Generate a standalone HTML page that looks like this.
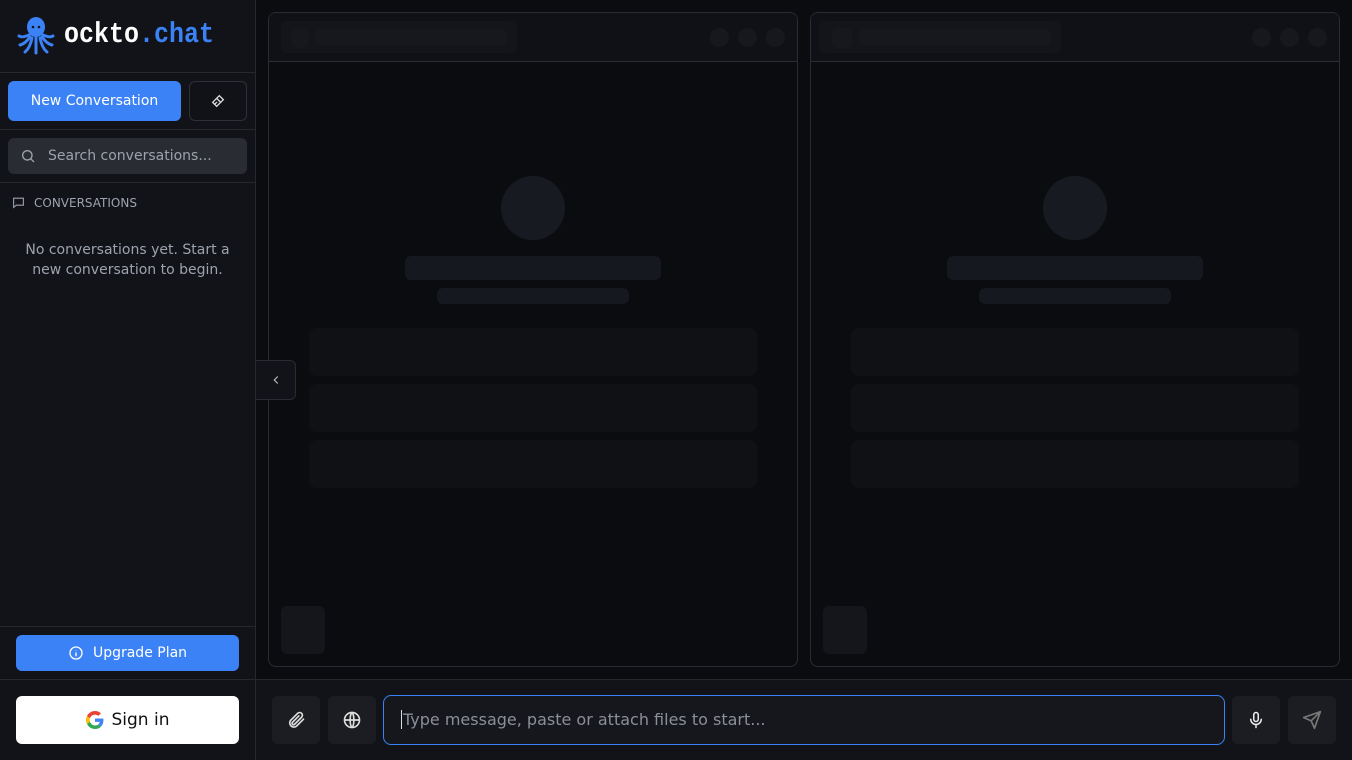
<!DOCTYPE html>
<html><head><meta charset="utf-8"><style>
*{box-sizing:border-box;margin:0;padding:0}
body{width:1352px;height:760px;background:#0b0c10;font-family:"DejaVu Sans","Liberation Sans",sans-serif;color:#e5e7eb;position:relative;overflow:hidden}
.sb{position:absolute;left:0;top:0;width:256px;height:760px;background:#121318;border-right:1px solid #26282e}
.hl{position:absolute;left:0;width:255px;height:1px;background:#26282e}
.btn{position:absolute;border-radius:6px;display:flex;align-items:center;justify-content:center}
.panel{position:absolute;top:12px;width:530px;height:655px;border:1px solid #2a2c33;border-radius:8px;background:#0b0c10;overflow:hidden}
.ph{height:49px;background:#101116;border-bottom:1px solid #2a2c33;position:relative}
.sk{position:absolute;background:#0f1115;border-radius:6px}
.c{position:absolute;border-radius:50%;background:#16181e}
</style></head><body>
<div class="sb">
 <svg style="position:absolute;left:17px;top:16px" width="38" height="40" viewBox="0 0 38 40" fill="#3b82f6">
  <ellipse cx="19" cy="11" rx="9" ry="10"/>
  <g stroke="#3b82f6" stroke-width="3" fill="none" stroke-linecap="round">
   <path d="M12 19 Q5 22 2 20"/><path d="M13 21 Q8 28 3 29"/><path d="M15 22 Q13 32 8 36"/><path d="M19 22 L19 37"/><path d="M23 22 Q25 32 30 36"/><path d="M25 21 Q30 28 35 29"/><path d="M26 19 Q33 22 36 20"/>
  </g>
  <circle cx="16" cy="11" r="1.3" fill="#121318"/><circle cx="22" cy="11" r="1.3" fill="#121318"/>
 </svg>
 <div style="position:absolute;left:64px;top:18px;font-family:'Liberation Mono','DejaVu Sans Mono',monospace;font-weight:bold;font-size:25px;line-height:34px;transform:scaleY(1.15);transform-origin:left center"><span style="color:#fff">ockto</span><span style="color:#3b82f6">.chat</span></div>
 <div class="hl" style="top:72px"></div>
 <div class="btn" style="left:8px;top:81px;width:173px;height:40px;background:#3b82f6;color:#fff;font-size:14px">New Conversation</div>
 <div class="btn" style="left:189px;top:81px;width:58px;height:40px;border:1px solid #2e3037;background:#111217"><svg width="16" height="16" viewBox="0 0 24 24" fill="none" stroke="#ddd" stroke-width="2" stroke-linecap="round"><path d="M14 4l6 6-4 4-6-6z"/><path d="M10 8l-6 6 6 6 6-6"/><path d="M7 17l3-3"/></svg></div>
 <div class="hl" style="top:129px"></div>
 <div class="btn" style="left:8px;top:138px;width:239px;height:36px;background:#2a2c33;justify-content:flex-start;padding-left:12px;color:#9ca3af;font-size:14px"><svg width="16" height="16" viewBox="0 0 24 24" fill="none" stroke="#9ca3af" stroke-width="2"><circle cx="11" cy="11" r="7"/><path d="M16 16l5 5"/></svg><span style="margin-left:12px">Search conversations...</span></div>
 <div class="hl" style="top:182px"></div>
 <svg style="position:absolute;left:12px;top:196px" width="13" height="13" viewBox="0 0 24 24" fill="none" stroke="#9ca3af" stroke-width="2"><path d="M3 4h18v13H8l-5 4z"/></svg>
 <div style="position:absolute;left:34px;top:196px;font-size:12px;color:#9ca3af">CONVERSATIONS</div>
 <div style="position:absolute;left:0;width:255px;top:240px;text-align:center;font-size:14px;line-height:20px;color:#9ca3af">No conversations yet. Start a<br>new conversation to begin.</div>
 <div class="hl" style="top:626px"></div>
 <div class="btn" style="left:16px;top:635px;width:223px;height:36px;background:#3b82f6;color:#fff;font-size:14px"><svg width="16" height="16" viewBox="0 0 24 24" fill="none" stroke="#fff" stroke-width="2"><circle cx="12" cy="12" r="9"/><path d="M12 11v6M12 7.5v.5"/></svg><span style="margin-left:9px">Upgrade Plan</span></div>
 <div class="hl" style="top:679px"></div>
 <div class="btn" style="left:16px;top:696px;width:223px;height:48px;background:#fff;color:#111;font-size:17px"><svg width="18" height="18" viewBox="0 0 48 48"><path fill="#EA4335" d="M24 9.5c3.5 0 6.6 1.2 9.1 3.6l6.8-6.8C35.8 2.4 30.3 0 24 0 14.6 0 6.6 5.4 2.7 13.3l7.9 6.1C12.5 13.6 17.8 9.5 24 9.5z"/><path fill="#4285F4" d="M46.5 24.5c0-1.6-.1-3.1-.4-4.5H24v9h12.7c-.6 2.9-2.2 5.4-4.7 7.1l7.6 5.9c4.4-4.1 6.9-10.1 6.9-17.5z"/><path fill="#FBBC05" d="M10.5 28.6c-.5-1.4-.8-3-.8-4.6s.3-3.2.8-4.6l-7.9-6.1C1 16.5 0 20.1 0 24s1 7.5 2.7 10.7z"/><path fill="#34A853" d="M24 48c6.5 0 11.9-2.1 15.9-5.8l-7.6-5.9c-2.1 1.4-4.9 2.3-8.3 2.3-6.2 0-11.5-4.2-13.4-9.9l-7.9 6.1C6.6 42.6 14.6 48 24 48z"/></svg><span style="margin-left:8px">Sign in</span></div>
</div>

<div class="panel" style="left:268px">
 <div class="ph"><div class="sk" style="left:12px;top:8px;width:236px;height:32px;background:#13151a"></div><div class="c" style="left:21px;top:15px;width:20px;height:20px"></div><div class="sk" style="left:46px;top:16px;width:192px;height:16px;background:#16181e"></div><div class="c" style="left:441px;top:15px;width:19px;height:19px"></div><div class="c" style="left:469px;top:15px;width:19px;height:19px"></div><div class="c" style="left:497px;top:15px;width:19px;height:19px"></div></div>
 <div class="c" style="left:232px;top:163px;width:64px;height:64px;background:#171a21"></div>
 <div class="sk" style="left:136px;top:243px;width:256px;height:24px;background:#15181e"></div>
 <div class="sk" style="left:168px;top:275px;width:192px;height:16px;background:#15181e"></div>
 <div class="sk" style="left:40px;top:315px;width:448px;height:48px;border-radius:8px"></div>
 <div class="sk" style="left:40px;top:371px;width:448px;height:48px;border-radius:8px"></div>
 <div class="sk" style="left:40px;top:427px;width:448px;height:48px;border-radius:8px"></div>
 <div class="sk" style="left:12px;top:593px;width:44px;height:48px;background:#14161b"></div>
</div>
<div class="panel" style="left:810px">
 <div class="ph"><div class="sk" style="left:8px;top:8px;width:242px;height:32px;background:#13151a"></div><div class="sk" style="left:21px;top:15px;width:20px;height:20px;background:#16181e"></div><div class="sk" style="left:48px;top:16px;width:192px;height:16px;background:#16181e"></div><div class="c" style="left:441px;top:15px;width:19px;height:19px"></div><div class="c" style="left:469px;top:15px;width:19px;height:19px"></div><div class="c" style="left:497px;top:15px;width:19px;height:19px"></div></div>
 <div class="c" style="left:232px;top:163px;width:64px;height:64px;background:#171a21"></div>
 <div class="sk" style="left:136px;top:243px;width:256px;height:24px;background:#15181e"></div>
 <div class="sk" style="left:168px;top:275px;width:192px;height:16px;background:#15181e"></div>
 <div class="sk" style="left:40px;top:315px;width:448px;height:48px;border-radius:8px"></div>
 <div class="sk" style="left:40px;top:371px;width:448px;height:48px;border-radius:8px"></div>
 <div class="sk" style="left:40px;top:427px;width:448px;height:48px;border-radius:8px"></div>
 <div class="sk" style="left:12px;top:593px;width:44px;height:48px;background:#14161b"></div>
</div>
<div class="btn" style="left:256px;top:360px;width:40px;height:40px;background:#121318;border:1px solid #2a2c33;border-left:none;border-radius:0 6px 6px 0;z-index:5"><svg width="14" height="14" viewBox="0 0 24 24" fill="none" stroke="#bbb" stroke-width="2"><path d="M15 6l-6 6 6 6"/></svg></div>

<div style="position:absolute;left:256px;top:679px;width:1096px;height:81px;background:#121318;border-top:1px solid #26282e"></div>
<div class="btn" style="left:272px;top:696px;width:48px;height:48px;background:#1c1d23"><svg width="20" height="20" viewBox="0 0 24 24" fill="none" stroke="#ddd" stroke-width="2" stroke-linecap="round"><path d="M21 11l-8.5 8.5a5 5 0 01-7-7L14 4a3.3 3.3 0 014.7 4.7L10.2 17.2a1.7 1.7 0 01-2.4-2.4L15.5 7"/></svg></div>
<div class="btn" style="left:328px;top:696px;width:48px;height:48px;background:#1c1d23"><svg width="20" height="20" viewBox="0 0 24 24" fill="none" stroke="#ddd" stroke-width="2"><circle cx="12" cy="12" r="9"/><path d="M3 12h18M12 3c3 3 3 15 0 18M12 3c-3 3-3 15 0 18"/></svg></div>
<div style="position:absolute;left:383px;top:695px;width:842px;height:50px;border:1px solid #3b82f6;border-radius:8px;background:#16171c;padding-left:17px;line-height:48px;font-size:16px;color:#8b8f98"><span style="border-left:1px solid #ddd;padding-left:1px">Type message, paste or attach files to start...</span></div>
<div class="btn" style="left:1232px;top:696px;width:48px;height:48px;background:#1c1d23"><svg width="18" height="18" viewBox="0 0 24 24" fill="none" stroke="#eee" stroke-width="2" stroke-linecap="round"><rect x="9" y="2" width="6" height="12" rx="3"/><path d="M5 11a7 7 0 0014 0M12 18v4"/></svg></div>
<div class="btn" style="left:1288px;top:696px;width:48px;height:48px;background:#1c1d23"><svg width="20" height="20" viewBox="0 0 24 24" fill="none" stroke="#777" stroke-width="2" stroke-linejoin="round"><path d="M22 2L11 13M22 2l-7 20-4-9-9-4z"/></svg></div>
</body></html>
